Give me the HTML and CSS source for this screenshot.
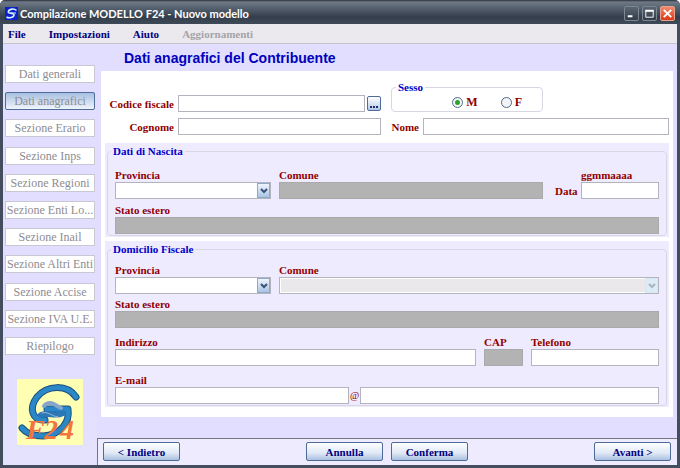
FILE: index.html
```html
<!DOCTYPE html>
<html lang="it">
<head>
    <meta charset="UTF-8">
    <title>Compilazione MODELLO F24 - Nuovo modello</title>
    <link rel="stylesheet" href="styles.css">
</head>
<body>
    <header class="titlebar">
        <svg class="app-icon" viewBox="0 0 13 13">
            <rect width="13" height="13" fill="#0a22c8"/>
            <path d="M11.500 3.500C9 1 4 2 3.300 4.800 2.800 7 9 5.500 9 8 9 10.500 4 11.500 1.500 10" fill="none" stroke="#d8f0ff" stroke-width="1.600"/>
            <path d="M5 6h6" stroke="#d8f0ff" stroke-width="1"/>
        </svg>
        <span class="window-title">Compilazione MODELLO F24 - Nuovo modello</span>
        <div class="window-buttons">
            <button type="button" class="win-btn" aria-label="Riduci">
                <svg viewBox="0 0 14 14"><path d="M3 10h5" stroke="#fff" stroke-width="2"/></svg>
            </button>
            <button type="button" class="win-btn" aria-label="Ingrandisci">
                <svg viewBox="0 0 14 14"><path d="M3 4h8v7H3z" fill="none" stroke="#fff"/><path d="M2.500 4h9" stroke="#fff" stroke-width="2"/></svg>
            </button>
            <button type="button" class="win-btn win-close" aria-label="Chiudi">
                <svg viewBox="0 0 14 14"><path d="M3 3l8 8M11 3l-8 8" stroke="#fff" stroke-width="2"/></svg>
            </button>
        </div>
    </header>

    <nav class="menubar">
        <button type="button">File</button>
        <button type="button">Impostazioni</button>
        <button type="button">Aiuto</button>
        <button type="button" disabled>Aggiornamenti</button>
    </nav>

    <div class="workspace">
        <aside class="sidebar">
            <div class="steps">
                <button type="button" class="step" disabled>Dati generali</button>
                <button type="button" class="step active" disabled>Dati anagrafici</button>
                <button type="button" class="step" disabled>Sezione Erario</button>
                <button type="button" class="step" disabled>Sezione Inps</button>
                <button type="button" class="step" disabled>Sezione Regioni</button>
                <button type="button" class="step" disabled>Sezione Enti Lo...</button>
                <button type="button" class="step" disabled>Sezione Inail</button>
                <button type="button" class="step" disabled>Sezione Altri Enti</button>
                <button type="button" class="step" disabled>Sezione Accise</button>
                <button type="button" class="step" disabled>Sezione IVA U.E.</button>
                <button type="button" class="step" disabled>Riepilogo</button>
            </div>
            <svg class="logo" viewBox="0 0 66 66">
                <rect width="66" height="66" fill="#ffffb4"/>
                <g fill="none" stroke-linecap="round" stroke-linejoin="round">
                    <path d="M59 18C50 5 30 6 20 18 11 30 16 42 28 41M30 30L51 30C53 43 44 56 26 57 17 57 9 54 5 49" stroke="#1c4f7c" stroke-width="7"/>
                    <path d="M59 18C50 5 30 6 20 18 11 30 16 42 28 41M30 30L51 30C53 43 44 56 26 57 17 57 9 54 5 49" stroke="#2b88c8" stroke-width="5"/>
                    <path d="M27 27C33 20 39 27 44 29" stroke="#86a5cc" stroke-width="4"/>
                    <path d="M24 36C32 33 38 38 46 34" stroke="#2b78b8" stroke-width="6"/>
                    <path d="M25 34C31 32 34 37 41 38" stroke="#9db6d8" stroke-width="1"/>
                </g>
                <text x="9 27 43" y="60" class="logo-text">F24</text>
            </svg>
        </aside>

        <form class="content" id="contribuente">
            <h1>Dati anagrafici del Contribuente</h1>

            <div class="panel">
                <div class="identity">
                    <div class="line">
                        <label for="cf" class="side-label">Codice fiscale</label>
                        <input type="text" id="cf">
                        <button type="button" class="browse" aria-label="Cerca">
                            <svg viewBox="0 0 12 12"><path d="M2 8h2v2H2zM5 8h2v2H5zM8 8h2v2H8z" fill="#1d2f6d"/></svg>
                        </button>
                    </div>
                    <fieldset class="gender">
                        <legend>Sesso</legend>
                        <label><input type="radio" name="sesso" value="M" checked>M</label>
                        <label><input type="radio" name="sesso" value="F">F</label>
                    </fieldset>
                    <div class="line">
                        <label for="cognome" class="side-label">Cognome</label>
                        <input type="text" id="cognome">
                    </div>
                    <div class="line">
                        <label for="nome" class="name-label">Nome</label>
                        <input type="text" id="nome">
                    </div>
                </div>

                <div class="group">
                    <fieldset class="birth">
                        <legend>Dati di Nascita</legend>
                        <div class="row birth-row">
                            <div class="field">
                                <label for="nprov">Provincia</label>
                                <div class="combo">
                                    <select id="nprov"></select>
                                    <span class="arrow"><svg viewBox="0 0 8 6"><path d="M1 1l3 3 3-3" fill="none" stroke="#3c5078" stroke-width="2"/></svg></span>
                                </div>
                            </div>
                            <div class="field">
                                <label for="ncom">Comune</label>
                                <input type="text" id="ncom" disabled>
                            </div>
                            <label for="ndata" class="date-label">Data</label>
                            <div class="field">
                                <label for="ndata">ggmmaaaa</label>
                                <input type="text" id="ndata">
                            </div>
                        </div>
                        <div class="field">
                            <label for="nstato">Stato estero</label>
                            <input type="text" id="nstato" disabled>
                        </div>
                    </fieldset>
                </div>

                <div class="group">
                    <fieldset class="home">
                        <legend>Domicilio Fiscale</legend>
                        <div class="row home-row">
                            <div class="field">
                                <label for="dprov">Provincia</label>
                                <div class="combo">
                                    <select id="dprov"></select>
                                    <span class="arrow"><svg viewBox="0 0 8 6"><path d="M1 1l3 3 3-3" fill="none" stroke="#3c5078" stroke-width="2"/></svg></span>
                                </div>
                            </div>
                            <div class="field">
                                <label for="dcom">Comune</label>
                                <div class="combo combo-off">
                                    <select id="dcom" disabled></select>
                                    <span class="arrow"><svg viewBox="0 0 8 6"><path d="M1 1l3 3 3-3" fill="none" stroke="#a9b4bd" stroke-width="2"/></svg></span>
                                </div>
                            </div>
                        </div>
                        <div class="field">
                            <label for="dstato">Stato estero</label>
                            <input type="text" id="dstato" disabled>
                        </div>
                        <div class="row address-row">
                            <div class="field">
                                <label for="indirizzo">Indirizzo</label>
                                <input type="text" id="indirizzo">
                            </div>
                            <div class="field">
                                <label for="cap">CAP</label>
                                <input type="text" id="cap" disabled>
                            </div>
                            <div class="field">
                                <label for="telefono">Telefono</label>
                                <input type="text" id="telefono">
                            </div>
                        </div>
                        <div class="row mail-row">
                            <div class="field">
                                <label for="email">E-mail</label>
                                <input type="text" id="email">
                            </div>
                            <span class="at">@</span>
                            <input type="text" aria-label="Dominio e-mail">
                        </div>
                    </fieldset>
                </div>
            </div>
        </form>

        <footer class="actions">
            <button type="button">&lt; Indietro</button>
            <div class="center-actions">
                <button type="reset" form="contribuente">Annulla</button>
                <button type="submit" form="contribuente">Conferma</button>
            </div>
            <button type="button">Avanti &gt;</button>
        </footer>
    </div>
</body>
</html>
```
FILE: styles.css
```css
* {
    box-sizing: border-box;
}

html {
    background: #fff;
}

body {
    margin: 0;
    min-height: 100vh;
    display: flex;
    flex-direction: column;
    padding: 0 3px 3px;
    border-radius: 5px 5px 0 0;
    background: #434d5d;
    font: bold 11px/14px "Liberation Serif", serif;
    color: #8f0000;
}

button, input, select {
    font: inherit;
    margin: 0;
}

/* barra del titolo */
.titlebar {
    display: flex;
    align-items: center;
    gap: 2px;
    height: 24px;
    margin: 0 -3px;
    padding: 3px 5px 0;
    border-radius: 5px 5px 0 0;
    background: linear-gradient(#2b313a, #6f7986 2px, #56616f 8px, #343e4b 17px, #3f4a58);
}

.app-icon {
    width: 13px;
    height: 13px;
}

.window-title {
    flex: 1;
    font: bold 11px/16px Lato, sans-serif;
    color: #fff;
}

.window-buttons {
    display: flex;
    gap: 3px;
}

.win-btn {
    width: 15px;
    height: 15px;
    padding: 0;
    border: 1px solid #7d8791;
    border-radius: 2px;
    background: linear-gradient(#5c6672, #323c48);
}

.win-btn svg {
    display: block;
}

.win-close {
    border-color: #e9a08e;
    background: linear-gradient(#f08a6c, #d93a17);
}

/* menu */
.menubar {
    display: flex;
    gap: 23px;
    height: 20px;
    padding-left: 5px;
    background: #ebe9ed;
    border-bottom: 1px solid #c4c2cc;
}

.menubar button {
    padding: 0;
    border: 0;
    background: none;
    color: #000080;
}

.menubar button:disabled {
    color: #a5a3a9;
}

.workspace {
    flex: 1;
    display: grid;
    grid-template-columns: 94px 1fr;
    grid-template-rows: 1fr auto;
    background: #e1deff;
}

/* colonna sinistra */
.sidebar {
    grid-row: span 2;
    padding: 21px 0 0 2px;
    background: linear-gradient(#e1deff 75%, #e5e2fe);
}

.steps {
    display: flex;
    flex-direction: column;
    justify-content: space-between;
    width: 90px;
    height: 290px;
}

.step {
    height: 18px;
    padding: 0;
    border: 1px solid #c9c7d2;
    background: #fff;
    color: #8e8c92;
    font-size: 12px;
    font-weight: normal;
    white-space: nowrap;
}

.step.active {
    border: 1px solid #4f6b9a;
    border-radius: 2px;
    background: linear-gradient(#a6bfe0, #f0f5fc);
}

.logo {
    display: block;
    width: 66px;
    height: 66px;
    margin: 24px 0 0 12px;
}

.logo-text {
    font: italic bold 28px "Liberation Serif", serif;
    fill: #f4753c;
}

/* contenuto */
.content {
    padding: 0 4px;
}

h1 {
    margin: 0;
    padding: 6px 0 5px 23px;
    font: bold 14px/16px "Liberation Sans", sans-serif;
    color: #0000bc;
}

.panel {
    padding: 9px 4px 10px;
    background: #fff;
}

.identity {
    display: grid;
    grid-template-columns: 276fr 278fr;
    gap: 6px 10px;
    align-items: end;
    margin-bottom: 8px;
}

.line {
    display: flex;
    align-items: center;
    gap: 4px;
}

.line input {
    flex: 1;
}

.side-label {
    width: 69px;
    text-align: right;
}

.name-label {
    width: 28px;
    text-align: right;
}

input[type="text"], select {
    display: block;
    width: 100%;
    min-width: 0;
    height: 17px;
    padding: 0 2px;
    border: 1px solid #b4b4be;
    border-radius: 0;
    background: #fff;
    color: #000;
}

input[type="text"]:disabled {
    border-color: #aaaaac;
    background: #b3b3b3;
}

.browse {
    width: 14px;
    height: 15px;
    margin-left: -2px;
    padding: 0;
    border: 1px solid #4f6b9a;
    border-radius: 2px;
    background: linear-gradient(#fff, #b4c9e8);
}

.browse svg {
    display: block;
}

fieldset {
    min-width: 0;
    margin: 0;
    border: 1px solid #d9d6e4;
    border-radius: 4px;
}

legend {
    margin-left: -4px;
    padding: 0 2px;
    color: #0000c8;
}

.gender {
    display: flex;
    justify-content: flex-end;
    gap: 23px;
    width: 152px;
    padding: 1px 20px 2px 8px;
}

.gender label {
    display: flex;
    align-items: center;
    gap: 3px;
    font-size: 12px;
}

.gender input {
    appearance: none;
    width: 11px;
    height: 11px;
    border: 1px solid #4f6b8e;
    border-radius: 50%;
    background: #f4f4f6;
}

.gender input:checked {
    background: radial-gradient(#2aa52a 2px, #f4f4f6 3px);
}

.group {
    padding: 1px 2px;
    background: #efebfe;
}

.group + .group {
    margin-top: 4px;
}

.birth, .home {
    display: flex;
    flex-direction: column;
    gap: 4px;
    padding: 10px 7px 1px;
}

.home {
    gap: 3px;
    padding-top: 7px;
}

.row {
    display: grid;
    column-gap: 8px;
    align-items: end;
}

.field label {
    display: block;
}

.birth-row {
    grid-template-columns: 156fr 264fr 22px 78fr;
}

.home-row {
    grid-template-columns: 156fr 380fr;
}

.address-row {
    grid-template-columns: 361fr 39px 128fr;
    margin-top: 4px;
}

.mail-row {
    grid-template-columns: 234fr 9px 299fr;
    column-gap: 1px;
    margin-top: 4px;
}

.date-label {
    margin-bottom: 1px;
    padding-left: 4px;
}

.at {
    margin-bottom: 1px;
    text-align: center;
    font-weight: normal;
    font-size: 10px;
}

.combo {
    position: relative;
}

.combo select {
    appearance: none;
}

.arrow {
    position: absolute;
    top: 1px;
    right: 1px;
    bottom: 1px;
    display: flex;
    align-items: center;
    justify-content: center;
    width: 13px;
    border: 1px solid #8fa9c8;
    background: linear-gradient(#eef5fd, #a9c4e4);
    pointer-events: none;
}

.arrow svg {
    width: 8px;
    height: 6px;
}

.combo-off select {
    background: #ebe8ec;
    opacity: 1;
    box-shadow: inset 0 0 0 1px #fff;
}

.combo-off .arrow {
    border-color: #dbe7f2;
    background: #dcebf8;
}

/* pulsanti in basso */
.actions {
    display: grid;
    grid-template-columns: 1fr auto 1fr;
    padding: 3px 6px 4px 5px;
    border: solid #77757f;
    border-width: 1px 0 0 1px;
    background: #efebfe;
}

.center-actions {
    display: flex;
    gap: 8px;
}

.actions button {
    width: 77px;
    height: 19px;
    padding: 0;
    border: 1px solid #4f6b9a;
    border-radius: 2px;
    background: linear-gradient(#fff, #dfe8f5 60%, #a9bfe0);
    color: #000080;
}

.actions > button:last-child {
    justify-self: end;
}
```
